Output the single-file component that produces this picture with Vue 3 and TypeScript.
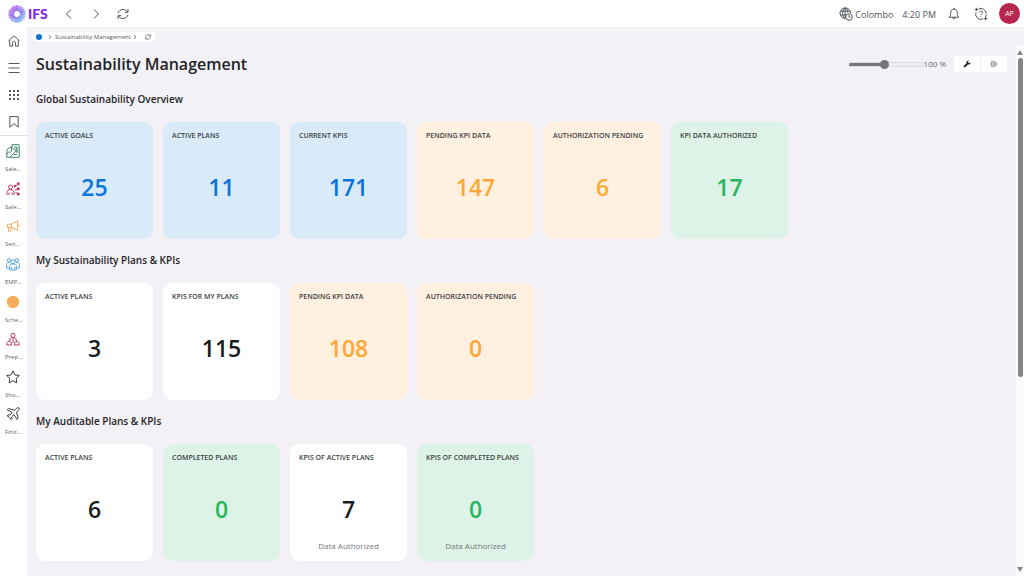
<script setup lang="ts">
import { ref, computed } from 'vue'

type Tone = 'blue' | 'orange' | 'green' | 'white'
interface Card { label: string; value: number; tone: Tone; note?: string }
interface Section { title: string; cards: Card[] }
interface Shortcut { icon: string; label: string }

const sections: Section[] = [
  {
    title: 'Global Sustainability Overview',
    cards: [
      { label: 'Active Goals', value: 25, tone: 'blue' },
      { label: 'Active Plans', value: 11, tone: 'blue' },
      { label: 'Current KPIs', value: 171, tone: 'blue' },
      { label: 'Pending KPI Data', value: 147, tone: 'orange' },
      { label: 'Authorization Pending', value: 6, tone: 'orange' },
      { label: 'KPI Data Authorized', value: 17, tone: 'green' },
    ],
  },
  {
    title: 'My Sustainability Plans & KPIs',
    cards: [
      { label: 'Active Plans', value: 3, tone: 'white' },
      { label: 'KPIs for My Plans', value: 115, tone: 'white' },
      { label: 'Pending KPI Data', value: 108, tone: 'orange' },
      { label: 'Authorization Pending', value: 0, tone: 'orange' },
    ],
  },
  {
    title: 'My Auditable Plans & KPIs',
    cards: [
      { label: 'Active Plans', value: 6, tone: 'white' },
      { label: 'Completed Plans', value: 0, tone: 'green' },
      { label: 'KPIs of Active Plans', value: 7, tone: 'white', note: 'Data Authorized' },
      { label: 'KPIs of Completed Plans', value: 0, tone: 'green', note: 'Data Authorized' },
    ],
  },
]

const shortcuts: Shortcut[] = [
  { icon: 'report', label: 'Sale...' },
  { icon: 'network', label: 'Sale...' },
  { icon: 'megaphone', label: 'Sen...' },
  { icon: 'people', label: 'EMP...' },
  { icon: 'dot', label: 'Sche...' },
  { icon: 'org', label: 'Prep...' },
  { icon: 'star', label: 'Sho...' },
  { icon: 'plane', label: 'Finit...' },
]

const zoom = ref(100)
const fill = computed(() => `${(zoom.value / 210) * 100}%`)

const rays = Array.from({ length: 26 }, (_, i) => {
  const a = (i / 26) * Math.PI * 2
  const pt = (r: number, o: number) => `${(10 + r * Math.cos(a + o)).toFixed(2)} ${(10 + r * Math.sin(a + o)).toFixed(2)}`
  return `M${pt(3.8, 0)}L${pt(9.5, 0.35)}`
})
</script>

<template>
  <div class="shell">
    <header class="topbar">
      <a class="logo" href="#" aria-label="IFS home">
        <svg viewBox="0 0 20 20" width="18" height="18" aria-hidden="true">
          <defs>
            <linearGradient id="burst" gradientUnits="userSpaceOnUse" x1="3" y1="2" x2="17" y2="17">
              <stop offset="0" stop-color="#a23be8" />
              <stop offset="0.5" stop-color="#7b5fe6" />
              <stop offset="1" stop-color="#58a8f5" />
            </linearGradient>
          </defs>
          <circle cx="10" cy="10" r="6.4" fill="none" stroke="url(#burst)" stroke-width="5.6" opacity="0.35" />
          <path v-for="(d, i) in rays" :key="i" :d="d" stroke="url(#burst)" stroke-width="0.9" stroke-linecap="round" fill="none" />
        </svg>
        <span>IFS</span>
      </a>
      <nav class="history" aria-label="History">
        <button type="button" aria-label="Back">
          <svg viewBox="0 0 12 12" width="12" height="12"><path d="M8 1.500 3.500 6 8 10.500" /></svg>
        </button>
        <button type="button" aria-label="Forward">
          <svg viewBox="0 0 12 12" width="12" height="12"><path d="M4 1.500 8.500 6 4 10.500" /></svg>
        </button>
        <button type="button" aria-label="Refresh">
          <svg viewBox="0 0 12 12" width="12" height="12"><path d="M1 5.200C1.500 2.800 3.500 1.500 6 1.500c2 0 3.500.9 4.600 2.500M11 1v3.300H7.700M11 6.800c-.5 2.400-2.500 3.700-5 3.700-2 0-3.500-.9-4.600-2.500M1 11V7.700h3.300" /></svg>
        </button>
      </nav>
      <div class="status">
        <svg viewBox="0 0 14 14" width="14" height="14" aria-hidden="true">
          <path d="M6.300 11.500A5.300 5.300 0 1 1 11.600 6M6 .9C4.300 2.300 3.700 4.200 3.700 6.200s.6 3.900 2.300 5.300M6.500.9C8 2 8.700 3.600 8.800 5.600M1.500 4.200h9.600M1.200 8h5.300M6.200 1v10" />
          <circle cx="10" cy="10" r="3.300" /><path d="M10 8v2.200h1.500" />
        </svg>
        <span class="place">Colombo</span>
        <time>4:20 PM</time>
        <button type="button" class="bell" aria-label="Notifications">
          <svg viewBox="0 0 12 14" width="12" height="14"><path d="M1 10.200c1.400-1 1.700-2.200 1.700-4.400C2.700 3.500 4 2.100 6 2.100s3.300 1.400 3.300 3.700c0 2.200.3 3.400 1.700 4.400zM4.700 10.400c0 2 2.600 2 2.600 0M6 2V1" /></svg>
        </button>
        <button type="button" class="help" aria-label="Help">
          <svg viewBox="0 0 14 14" width="14" height="14"><path d="M4.500 2.100A5.300 5.300 0 0 1 12.200 6.500M1.900 5.500a5.300 5.300 0 0 0 7.500 6.300M12.200 7.500c-.1 1-.4 1.800-.9 2.500M5.400 5.600c0-2 3.300-2 3.300 0 0 1.200-1.700 1.200-1.700 2.500M7 9.300v.9M2.400.8v3.200M.8 2.400H4M11.700 10v3.200M10.100 11.600h3.200" /></svg>
        </button>
        <button type="button" class="avatar" aria-label="Account AP">AP</button>
      </div>
    </header>

    <div class="body">
      <aside class="rail">
        <nav class="tools" aria-label="Main">
          <button type="button" aria-label="Home">
            <svg viewBox="0 0 12 12" width="12" height="12"><path d="M.6 5.800 6 .8l5.400 5M1.700 5v6.200h2.700V8c0-2.200 3.200-2.200 3.200 0v3.200h2.700V5" /></svg>
          </button>
          <button type="button" aria-label="Menu">
            <svg viewBox="0 0 12 12" width="12" height="12"><path d="M.5 1.500h11M.5 6h11M.5 10.500h11" /></svg>
          </button>
          <button type="button" aria-label="Applications">
            <svg viewBox="0 0 12 12" width="12" height="12" class="solid"><path d="M1 1h2v2H1zM5 1h2v2H5zM9 1h2v2H9zM1 5h2v2H1zM5 5h2v2H5zM9 5h2v2H9zM1 9h2v2H1zM5 9h2v2H5zM9 9h2v2H9z" /></svg>
          </button>
          <button type="button" aria-label="Bookmarks">
            <svg viewBox="0 0 12 12" width="12" height="12"><path d="M1.800.6h8.400v10.600L6 7.700l-4.200 3.500z" /></svg>
          </button>
        </nav>
        <nav class="shortcuts" aria-label="Shortcuts">
          <a v-for="(s, i) in shortcuts" :key="i" href="#" :class="s.icon">
            <svg viewBox="0 0 14 14" width="14" height="14" aria-hidden="true">
              <template v-if="s.icon === 'report'">
                <path d="M6 3V.7h7.200v12.600H3.500M.8 13.300V8c0-2.600 1.700-4.500 4.700-5.200L9.800 7.200 4 13.300zM5.500 3v3.800c0 1.400-1 1.300-2.200 1.300S1 9 1 10.500M8 3h3M9 5h2.500M10 7h1.500M8 10.500h3M11 3v6" />
              </template>
              <template v-else-if="s.icon === 'network'">
                <circle cx="4.500" cy="5" r="2" />
                <path d="M1 13V10.500C1 8.500 2.500 7.600 4.500 7.600S8 8.500 8 10.500V13M3 13v-2.500M6.200 13v-2.500M8.500 5.500l3-3M9 8l2.500-.5M9.500 10.500l2.500 1" />
                <circle class="full" cx="12.300" cy="1.800" r="1.500" /><circle class="full" cx="12.300" cy="6.800" r="1.500" /><circle class="full" cx="12.300" cy="12" r="1.500" /><circle class="full" cx="9" cy="4" r="1.200" />
              </template>
              <template v-else-if="s.icon === 'megaphone'">
                <path d="M1.300 5.200h4.200l6.200-3.500v9.600L5.500 8.500H1.300zM2.500 8.700v3.600h2.400V8.700M5.500 5.200v3.300M13 5.300v2.400" />
              </template>
              <template v-else-if="s.icon === 'people'">
                <circle cx="3" cy="3.300" r="1.700" /><circle cx="11" cy="3.300" r="1.700" /><circle cx="7" cy="4.700" r="1.900" />
                <path d="M3.700 13V9.200C3.700 7.700 5 7 7 7s3.300.7 3.300 2.200V13zM5.400 12.500V10M8.600 12.500V10M3.500 11H.6V7.500C.6 6 1.700 5.500 3.800 5.600M10.500 11h2.900V7.500c0-1.500-1.100-2-3.200-1.900" />
              </template>
              <circle v-else-if="s.icon === 'dot'" class="full" cx="7" cy="7" r="6.200" />
              <template v-else-if="s.icon === 'org'">
                <circle cx="7" cy="3.400" r="2.100" />
                <path d="M3.800 9V7.800c0-1.500 1.200-2.200 3.200-2.200s3.200.7 3.200 2.200V9M7 6v3M.8 13c0-2.300.6-3.700 2.300-3.700S5.400 10.700 5.400 13zM8.600 13c0-2.300.6-3.700 2.300-3.700s2.300 1.400 2.300 3.700zM5.400 11 7 9.500 8.600 11" />
              </template>
              <path v-else-if="s.icon === 'star'" d="m7 .9 1.900 4 4.400.6-3.200 3 .8 4.400L7 10.800l-3.900 2.100.8-4.400-3.200-3 4.400-.6z" />
              <path v-else d="M12.900 1.100c-.9-.7-2-.2-2.800.6L8.600 3.200 2.400 1.500 1.200 2.700l4.900 3-2.200 2.400-2-.3-.9.900 2.400 1.600 1.600 2.400.9-.9-.3-2 2.400-2.200 3 4.900 1.200-1.200-1.700-6.200 1.700-1.400c.8-.8 1.400-1.800.7-2.600z" />
            </svg>
            <span>{{ s.label }}</span>
          </a>
        </nav>
      </aside>

      <main class="page">
        <nav class="crumbs" aria-label="Breadcrumb">
          <a class="root" href="#" aria-label="Start"></a>
          <svg viewBox="0 0 4 6" width="4" height="6" aria-hidden="true"><path d="m1 1 2 2-2 2" /></svg>
          <a href="#">Sustainability Management</a>
          <svg viewBox="0 0 4 6" width="4" height="6" aria-hidden="true"><path d="m1 1 2 2-2 2" /></svg>
          <button type="button" aria-label="Reload page">
            <svg viewBox="0 0 12 12" width="6" height="6"><path class="heavy" d="M1 5.200C1.500 2.800 3.500 1.500 6 1.500c2 0 3.500.9 4.600 2.500M11 1v3.300H7.700M11 6.800c-.5 2.400-2.500 3.700-5 3.700-2 0-3.500-.9-4.600-2.500M1 11V7.700h3.300" /></svg>
          </button>
        </nav>

        <div class="scroller">
          <div class="content">
            <div class="heading">
              <h1>Sustainability Management</h1>
              <label class="zoom">
                <input v-model.number="zoom" type="range" min="0" max="210" aria-label="Zoom" :style="{ '--fill': fill }" />
                <span>{{ zoom }} %</span>
              </label>
              <div class="actions">
                <button type="button" aria-label="Configure">
                  <svg viewBox="0 0 8 8" width="8" height="8"><path d="M7.400 2.200 6.200 3l-1-.2-.2-1L6.100.6C4.900.2 3.600 1 3.600 2.400v.7L.8 5.900c-.6.8.6 1.900 1.400 1.300L5 4.500c1.600.3 2.700-.9 2.400-2.300z" /></svg>
                </button>
                <button type="button" aria-label="Tags">
                  <svg viewBox="0 0 8 8" width="8" height="8" class="tag"><path d="M1 1.800h3.700L7.300 4 4.700 6.200H1M.5 3.300h2M.5 4.700h2M3.800 3.500h1v1h-1z" /></svg>
                </button>
              </div>
            </div>

            <section v-for="section in sections" :key="section.title">
              <h2>{{ section.title }}</h2>
              <div class="cards">
                <article v-for="card in section.cards" :key="card.label" class="card" :class="card.tone">
                  <h3>{{ card.label }}</h3>
                  <p class="value">{{ card.value }}</p>
                  <p class="note">{{ card.note }}</p>
                </article>
              </div>
            </section>
          </div>
          <div class="scrollbar" aria-hidden="true">
            <svg viewBox="0 0 6 5" width="6" height="5"><path d="M3 0 6 5H0z" /></svg>
            <div class="track"><div class="thumb"></div></div>
            <svg viewBox="0 0 6 5" width="6" height="5"><path d="M0 0h6L3 5z" /></svg>
          </div>
        </div>
      </main>
    </div>
  </div>
</template>

<style>
body {
  margin: 0;
  overflow: hidden;
}
</style>

<style scoped>
.shell {
  display: flex;
  flex-direction: column;
  height: 100vh;
  overflow: hidden;
  font-family: "Open Sans", "Noto Sans", sans-serif;
  color: #242427;
  background: #f3f1f5;
}
* { box-sizing: border-box; }
h1, h2, h3, p { margin: 0; }
a { color: inherit; text-decoration: none; }
button {
  display: flex;
  align-items: center;
  justify-content: center;
  padding: 0;
  border: 0;
  background: none;
  font: inherit;
  color: inherit;
}
svg { display: block; flex: none; fill: none; stroke: currentColor; stroke-width: 1; }
.full, .solid { fill: currentColor; stroke: none; }

.topbar {
  display: flex;
  align-items: center;
  flex: none;
  height: 27px;
  padding: 0 4px 0 8px;
  background: #fff;
  color: #505458;
}
.logo {
  display: flex;
  align-items: center;
  gap: 2px;
  width: 55px;
  font: 900 14px/18px Lato, sans-serif;
  color: #8420e4;
}
.history { display: flex; gap: 15px; }
.history button { width: 12px; height: 20px; }
.status {
  display: flex;
  align-items: center;
  margin-left: auto;
  font-size: 9px;
  line-height: 14px;
}
.place { margin: 2px 9px 0 2px; }
.status time { margin-top: 2px; }
.bell { margin: 0 14px 0 12px; }
.help { margin-right: 11px; }
.avatar {
  width: 21px;
  height: 21px;
  border-radius: 50%;
  background: #b7264f;
  color: #fff;
  font-size: 7px;
}

.body { display: flex; flex: 1; min-height: 0; }
.rail { flex: none; width: 27px; background: #fff; color: #55585c; }
.tools {
  display: flex;
  flex-direction: column;
  border-bottom: 1px solid #dcdcdf;
  height: 109px;
}
.tools button { width: 27px; height: 27px; }
.shortcuts { display: flex; flex-direction: column; height: 301px; }
.shortcuts a {
  display: flex;
  flex-direction: column;
  flex: 1;
  gap: 8px;
  padding: 8px 0 0 6px;
}
.shortcuts span { margin-left: -1px; font-size: 6px; line-height: 7px; color: #606367; white-space: nowrap; }
.report svg { color: #42856b; }
.network svg, .org svg { color: #bb3b63; }
.megaphone svg, .dot svg { color: #f3ad5c; }
.people svg { color: #58a9d9; }
.star svg, .plane svg { color: #35383c; }

.page { display: flex; flex-direction: column; flex: 1; min-width: 0; }
.crumbs {
  display: flex;
  align-items: center;
  flex: none;
  align-self: flex-start;
  height: 10px;
  margin: 5px 0 4px 5px;
  padding: 0 5px 0 4px;
  border-radius: 5px;
  background: #fff;
  font-size: 6px;
  line-height: 10px;
  color: #55585c;
}
.crumbs svg { color: #85888c; }
.crumbs .root { width: 6px; height: 6px; margin-right: 6px; border-radius: 50%; background: #0a75d1; }
.crumbs svg + a { margin: 0 2px 0 3px; }
.crumbs button { margin-left: 8px; }
.heavy { stroke-width: 2; }

.scroller { display: flex; flex: 1; min-height: 0; }
.content { flex: 1; min-width: 0; padding: 8px 9px 0; }
.heading { display: flex; align-items: center; height: 20px; margin-bottom: 21px; }
h1 { font-size: 16px; line-height: 20px; font-weight: 600; }
.zoom { display: flex; align-items: center; margin-left: auto; font-size: 8px; line-height: 12px; color: #65676a; }
.zoom input {
  appearance: none;
  width: 75px;
  height: 10px;
  margin: 0;
  background: none;
}
.zoom input::-webkit-slider-runnable-track {
  height: 5px;
  border: 1px solid #dcdce0;
  border-left-color: #757578;
  border-radius: 3px;
  background: linear-gradient(#757578, #757578) border-box 0 0 / var(--fill) 100% no-repeat, #efeff1;
}
.zoom input::-webkit-slider-thumb {
  appearance: none;
  width: 9px;
  height: 9px;
  margin-top: -3px;
  border-radius: 50%;
  background: #757578;
}
.actions { display: flex; gap: 1px; margin-left: 8px; }
.actions button { width: 26px; height: 16px; border-radius: 2px; background: #fff; color: #222; }
.actions svg { fill: currentColor; stroke: none; }
.actions .tag { fill: none; stroke: #76797d; }

section { margin-bottom: 17px; }
h2 { margin-bottom: 19px; font-size: 10px; line-height: 8px; font-weight: 600; }
.cards { display: grid; grid-template-columns: repeat(6, 117px); gap: 10px; }
.card {
  display: grid;
  grid-template-rows: 40px 1fr 27px;
  height: 117px;
  border-radius: 9px;
}
.card h3 {
  padding: 9px 9px 0;
  font-size: 7px;
  line-height: 9px;
  font-weight: 600;
  text-transform: uppercase;
  white-space: nowrap;
  color: #3c3f43;
}
.value { align-self: center; text-align: center; font-size: 23px; line-height: 32px; font-weight: 600; }
.note { text-align: center; font-size: 8px; line-height: 12px; padding-top: 6px; color: #75787c; }
.white { background: #fff; color: #1c1c1f; }
.blue { background: #d9eaf8; color: #0a75d8; }
.orange { background: #fff0e0; color: #ffa733; }
.green { background: #ddf3e7; color: #28b55c; }

.scrollbar {
  display: flex;
  flex-direction: column;
  align-items: center;
  flex: none;
  width: 8px;
  padding: 4px 0;
  background: #fbfbfc;
  color: #858587;
}
.scrollbar svg { fill: currentColor; stroke: none; }
.track { flex: 1; width: 5px; margin: 3px 0; }
.thumb { height: 63%; border-radius: 3px; background: #858587; }
</style>
